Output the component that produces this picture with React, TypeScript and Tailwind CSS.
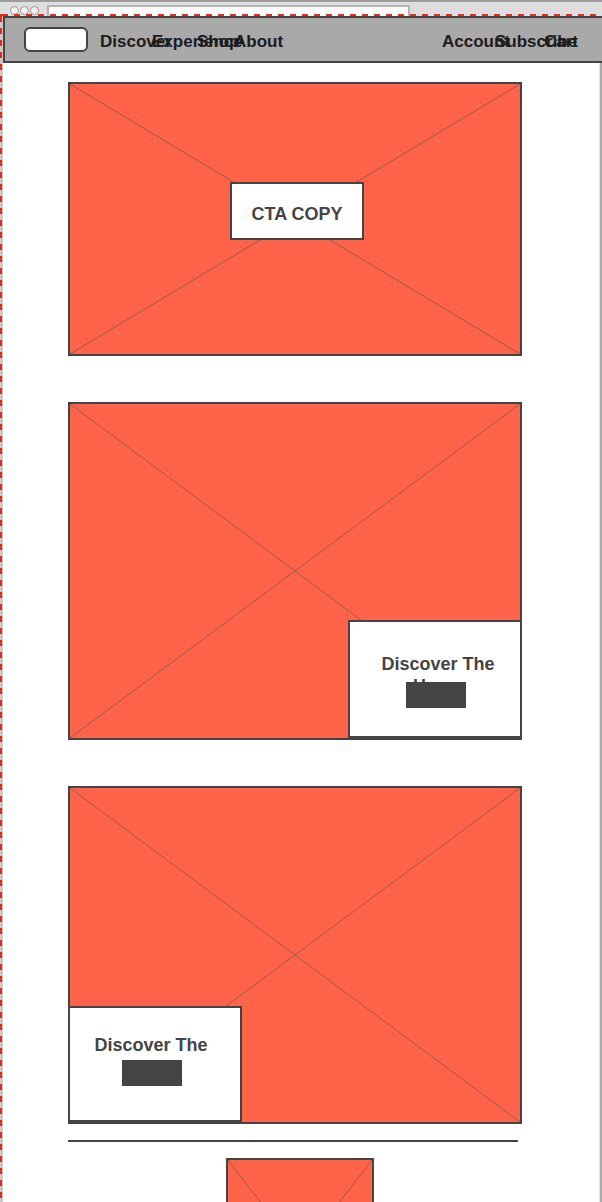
import React from "react";

const lineColor = "#9a5a4e";

function Crossed({ className = "", children }: { className?: string; children?: React.ReactNode }) {
  return (
    <div className={`relative border-2 border-[#444] bg-[#ff6349] ${className}`}>
      <svg className="absolute inset-0 h-full w-full" viewBox="0 0 100 100" preserveAspectRatio="none">
        <line x1="0" y1="0" x2="100" y2="100" stroke={lineColor} strokeWidth="1" vectorEffect="non-scaling-stroke" />
        <line x1="100" y1="0" x2="0" y2="100" stroke={lineColor} strokeWidth="1" vectorEffect="non-scaling-stroke" />
      </svg>
      {children}
    </div>
  );
}

function Caption({ textClass, barClass }: { textClass: string; barClass: string }) {
  return (
    <>
      <p className={`absolute w-[120px] text-center text-[18px] leading-[22px] font-bold text-[#444] ${textClass}`}>Discover The Home</p>
      <div className={`absolute h-[26px] w-[60px] bg-[#444] ${barClass}`} />
    </>
  );
}

export default function App() {
  return (
    <div className="relative flex h-[1202px] w-[602px] flex-col overflow-hidden bg-white font-['Liberation_Sans',Arial,sans-serif]">
      {/* browser chrome */}
      <div className="flex h-[16px] shrink-0 items-start border-t-2 border-[#9c9c9c] bg-[#dedede]">
        <div className="ml-[10px] mt-[4px] flex gap-[1px]">
          {[0, 1, 2].map((i) => (
            <span key={i} className="h-[9px] w-[9px] rounded-full border-[1.5px] border-[#959595] bg-[#f2f2f2]" />
          ))}
        </div>
        <div className="ml-[8px] mt-[3px] h-[12px] w-[363px] border-2 border-b-0 border-[#b4b4b4] bg-white" />
      </div>
      <div className="absolute left-0 top-[14px] h-[2px] w-full bg-[repeating-linear-gradient(90deg,#e42a1f_0_6px,transparent_6px_12px)] bg-[position:2px_0]" />

      <div className="flex flex-1">
        {/* left guide */}
        <div className="relative w-[3px] shrink-0 bg-[#c8c8c8]">
          <div className="absolute inset-y-0 left-0 w-[2px] bg-[repeating-linear-gradient(180deg,#e42a1f_0_6px,transparent_6px_12px)]" />
        </div>

        <div className="flex flex-1 flex-col">
          {/* nav */}
          <nav className="flex h-[47px] shrink-0 items-center border-y-2 border-l-2 border-[#444] bg-[#a9a9a9] text-[17px] font-bold text-[#1c1c1c]">
            <div className="ml-[19px] h-[25px] w-[64px] rounded-[6px] border-2 border-[#444] bg-white" />
            <div className="ml-[12px] flex whitespace-nowrap pt-[5px]">
              <span className="w-[52px]">Discover</span>
              <span className="w-[45px]">Experience</span>
              <span className="w-[37px]">Shop</span>
              <span>About</span>
            </div>
            <div className="ml-auto flex whitespace-nowrap pt-[5px]">
              <span className="w-[53px]">Account</span>
              <span className="w-[49px]">Subscribe</span>
              <span className="w-[58px]">Cart</span>
            </div>
          </nav>

          <div className="flex flex-1">
            <main className="relative flex flex-1 flex-col pl-[65px] pt-[19px]">
              <Crossed className="h-[274px] w-[454px]">
                <div className="absolute left-[160px] top-[98px] flex h-[58px] w-[134px] items-center justify-center border-2 border-[#444] bg-white pt-[6px] text-[18px] font-bold text-[#444]">
                  CTA COPY
                </div>
              </Crossed>

              <Crossed className="mt-[46px] h-[338px] w-[454px]">
                <div className="absolute bottom-0 right-[-2px] h-[118px] w-[174px] border-2 border-[#444] bg-white">
                  <Caption textClass="left-[28px] top-[31px]" barClass="left-[56px] top-[60px]" />
                </div>
              </Crossed>

              <Crossed className="mt-[46px] h-[338px] w-[454px]">
                <div className="absolute bottom-0 left-[-2px] h-[116px] w-[174px] border-2 border-[#444] bg-white">
                  <Caption textClass="left-[21px] top-[26px]" barClass="left-[52px] top-[52px]" />
                </div>
              </Crossed>

              <div className="mt-[16px] h-[2px] w-[450px] bg-[#444]" />

              <Crossed className="ml-[158px] mt-[16px] h-[190px] w-[148px] shrink-0" />

              <div className="pointer-events-none absolute inset-x-0 bottom-0 h-[70px] bg-linear-to-b from-transparent to-black/[0.06]" />
            </main>

            {/* right guide */}
            <div className="w-[3px] shrink-0 border-l border-[#e2e2e2] bg-[#aaaaaa]" />
          </div>
        </div>
      </div>
    </div>
  );
}
